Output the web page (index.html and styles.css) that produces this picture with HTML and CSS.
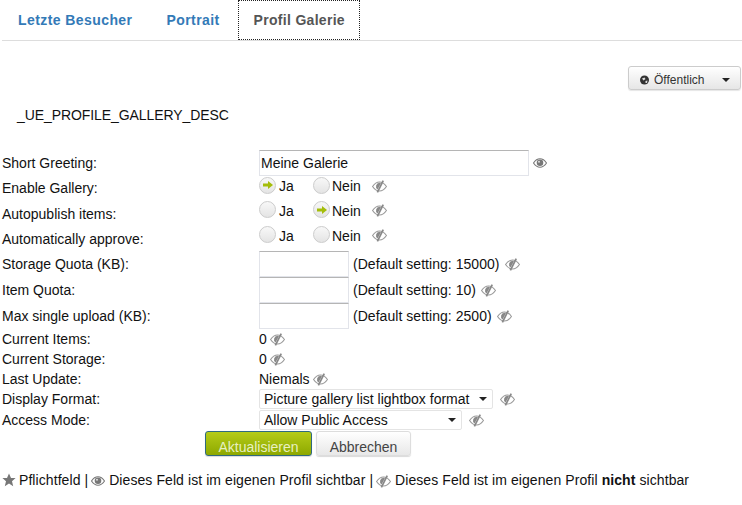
FILE: index.html
```html
<!DOCTYPE html>
<html lang="de">
<head>
<meta charset="utf-8">
<title>Profil Galerie</title>
<link rel="stylesheet" href="styles.css">
</head>
<body>
<svg class="defs" width="0" height="0" aria-hidden="true">
  <symbol id="eye" viewBox="0 0 14 10">
    <path d="M0.5 5C2.5 2 4.6 .8 7 .8S11.5 2 13.5 5C11.5 8 9.4 9.2 7 9.2S2.5 8 .5 5Z" fill="#fff" stroke="#777" stroke-width="1.1"/>
    <circle cx="7" cy="4.8" r="3.3" fill="#777"/>
    <circle cx="6" cy="3.8" r="1" fill="#ddd"/>
  </symbol>
  <symbol id="noeye" viewBox="0 0 14 12">
    <path d="M0.5 6C2.5 3 4.6 1.8 7 1.8S11.5 3 13.5 6C11.5 9 9.4 10.2 7 10.2S2.5 9 .5 6Z" fill="#fff" stroke="#999" stroke-width="1"/>
    <path d="M7 2.6A3.4 3.4 0 0 0 5.2 8.8L8.4 2.9A3.4 3.4 0 0 0 7 2.6Z" fill="#888"/>
    <path d="M10.5 .6L5 11.4" stroke="#888" stroke-width="1.6" fill="none"/>
  </symbol>
  <symbol id="arrow" viewBox="0 0 10 8">
    <path d="M0 2.5H5V0L10 4L5 8V5.5H0Z" fill="#a4bd0a"/>
  </symbol>
</svg>

<nav class="tabs">
  <a class="tab">Letzte Besucher</a>
  <a class="tab">Portrait</a>
  <a class="tab active">Profil Galerie</a>
</nav>

<div class="privacy-row">
  <button class="privacy" type="button">
    <svg class="globe" viewBox="0 0 10 10"><circle cx="5" cy="5" r="4.5" fill="#333"/><path d="M2.5 3.5L5 2.5 6 4 4 5.5ZM6 6L8 5.5 7.5 8 6 8Z" fill="#ddd"/></svg>
    <span>Öffentlich</span>
    <i class="caret"></i>
  </button>
</div>

<p class="desc">_UE_PROFILE_GALLERY_DESC</p>

<form class="form">
  <div class="row r-greeting">
    <label>Short Greeting:</label>
    <div class="field"><input class="text wide" type="text" value="Meine Galerie"><svg class="ic eye-ic"><use href="#eye"/></svg></div>
  </div>
  <div class="row r-radio">
    <label>Enable Gallery:</label>
    <div class="field radios">
      <span class="opt"><span class="radio"><svg><use href="#arrow"/></svg></span>Ja</span>
      <span class="opt"><span class="radio"></span>Nein</span>
      <svg class="ic no-ic"><use href="#noeye"/></svg>
    </div>
  </div>
  <div class="row r-radio2">
    <label>Autopublish items:</label>
    <div class="field radios">
      <span class="opt"><span class="radio"></span>Ja</span>
      <span class="opt"><span class="radio"><svg><use href="#arrow"/></svg></span>Nein</span>
      <svg class="ic no-ic"><use href="#noeye"/></svg>
    </div>
  </div>
  <div class="row r-radio3">
    <label>Automatically approve:</label>
    <div class="field radios">
      <span class="opt"><span class="radio"></span>Ja</span>
      <span class="opt"><span class="radio"></span>Nein</span>
      <svg class="ic no-ic"><use href="#noeye"/></svg>
    </div>
  </div>
  <div class="row r-num">
    <label>Storage Quota (KB):</label>
    <div class="field"><input class="text num" type="text"><span class="hint">(Default setting: 15000)</span><svg class="ic no-ic tight"><use href="#noeye"/></svg></div>
  </div>
  <div class="row r-num">
    <label>Item Quota:</label>
    <div class="field"><input class="text num" type="text"><span class="hint">(Default setting: 10)</span><svg class="ic no-ic tight"><use href="#noeye"/></svg></div>
  </div>
  <div class="row r-num">
    <label>Max single upload (KB):</label>
    <div class="field"><input class="text num" type="text"><span class="hint">(Default setting: 2500)</span><svg class="ic no-ic tight"><use href="#noeye"/></svg></div>
  </div>
  <div class="row r-plain">
    <label>Current Items:</label>
    <div class="field">0<svg class="ic no-ic tight"><use href="#noeye"/></svg></div>
  </div>
  <div class="row r-plain">
    <label>Current Storage:</label>
    <div class="field">0<svg class="ic no-ic tight"><use href="#noeye"/></svg></div>
  </div>
  <div class="row r-plain">
    <label>Last Update:</label>
    <div class="field">Niemals<svg class="ic no-ic tight"><use href="#noeye"/></svg></div>
  </div>
  <div class="row r-select">
    <label>Display Format:</label>
    <div class="field"><span class="select s-format">Picture gallery list lightbox format<i class="caret"></i></span><svg class="ic no-ic sel"><use href="#noeye"/></svg></div>
  </div>
  <div class="row r-select">
    <label>Access Mode:</label>
    <div class="field"><span class="select s-access">Allow Public Access<i class="caret"></i></span><svg class="ic no-ic sel"><use href="#noeye"/></svg></div>
  </div>
  <div class="actions">
    <button class="btn primary" type="button">Aktualisieren</button>
    <button class="btn" type="button">Abbrechen</button>
  </div>
</form>

<p class="legend">
  <svg class="star" viewBox="0 0 14 14"><path d="M7 .5L9 5H13.6L10 8.2 11.2 13.2 7 10.5 2.8 13.2 4 8.2 .4 5H5Z" fill="#777"/></svg>
  Pflichtfeld | <svg class="ic eye-ic"><use href="#eye"/></svg> Dieses Feld ist im eigenen Profil sichtbar | <svg class="ic no-ic"><use href="#noeye"/></svg> Dieses Feld ist im eigenen Profil <b>nicht</b> sichtbar
</p>
</body>
</html>
```

FILE: styles.css
```css
* { box-sizing: border-box; }
html, body { margin: 0; padding: 0; }
body {
  font-family: "Liberation Sans", Arial, sans-serif;
  font-size: 14px;
  color: #111;
  background: #fff;
  width: 742px;
  height: 505px;
  overflow: hidden;
}
.defs { display: block; height: 0; }

.tabs {
  display: flex;
  align-items: stretch;
  height: 41px;
  margin-left: 2px;
  border-bottom: 1px solid #ddd;
}
.tab {
  display: flex;
  align-items: center;
  padding: 0 16px;
  height: 40px;
  font-weight: bold;
  color: #337ab7;
  letter-spacing: 0.42px;
  margin-right: 2px;
  white-space: nowrap;
}
.tab.active {
  margin-left: 0;
  padding: 0 14px 0 15px;
  width: 122px;
  color: #555;
  letter-spacing: 0.3px;
  border: 1px dotted #222;
  background: #fff;
}

.privacy-row {
  display: flex;
  justify-content: flex-end;
  padding: 25px 1px 0 0;
}
.privacy {
  display: flex;
  align-items: center;
  width: 113px;
  height: 24px;
  padding: 3px 0 0 10px;
  font: 12px "Liberation Sans", Arial, sans-serif;
  color: #333;
  border: 1px solid #ccc;
  border-radius: 3px;
  background: linear-gradient(#fff, #e6e6e6);
  box-shadow: 0 1px 1px rgba(0,0,0,.1);
}
.globe { width: 11px; height: 10px; margin-right: 4px; }
.privacy .caret { margin-left: 18px; }
.caret {
  display: inline-block;
  width: 0;
  height: 0;
  border-top: 4px solid #222;
  border-left: 4px solid transparent;
  border-right: 4px solid transparent;
}

.desc { margin: 0; padding: 17px 0 0 17px; height: 60px; line-height: 16px; letter-spacing: -0.08px; }

.row { display: flex; align-items: center; padding-left: 2px; }
.row label { width: 257px; flex: none; }
.field { display: flex; align-items: center; }
.r-greeting { height: 26px; }
.r-radio { height: 24px; }
.r-radio2 { height: 27px; }
.r-radio3 { height: 23px; margin-bottom: 1px; }
.r-radio2 .radios, .r-radio3 .radios { padding-bottom: 6px; }
.r-num { height: 26px; }
.r-plain { height: 20px; }
.r-select { height: 21px; align-items: flex-start; }
.r-select label { line-height: 20px; }

.text {
  display: block;
  height: 26px;
  border: 1px solid #e2e4ea;
  border-top-color: #b5b5b5;
  font: 14px "Liberation Sans", Arial, sans-serif;
  color: #111;
  padding: 0 1px;
  outline: none;
}
.wide { width: 270px; }
.num { width: 90px; }
.hint { margin: 0 2px 0 4px; letter-spacing: 0.04px; }

.ic { display: inline-block; vertical-align: -2px; }
.eye-ic { width: 14px; height: 10px; margin-left: 4px; }
.no-ic { width: 15px; height: 13px; margin-left: 13px; }
.no-ic.tight { margin-left: 3px; }
.no-ic.sel { margin-left: 7px; }
.legend .no-ic { margin-left: -1px; vertical-align: -3px; }
.legend .eye-ic { margin-left: -1px; vertical-align: -1px; }

.radios { gap: 0; padding-bottom: 4px; }
.opt { display: flex; align-items: center; width: 54px; flex: none; }
.opt + .opt { width: 46px; white-space: nowrap; }
.opt + .opt .radio { margin-right: 2px; }
.radio {
  display: flex;
  align-items: center;
  justify-content: center;
  flex: none;
  width: 17px;
  height: 17px;
  margin: 0 3px 2px 0;
  border: 1px solid #ccc;
  border-radius: 50%;
  background: linear-gradient(#f8f8f8, #e4e4e4);
}
.radio svg { width: 10px; height: 8px; }

.select {
  display: flex;
  align-items: center;
  justify-content: space-between;
  height: 20px;
  padding: 0 5px 0 4px;
  background: #fff;
  border: 1px solid #e4e4e4;
  border-radius: 2px;
}
.select .caret { border-width: 4px 4px 0; }
.s-format { width: 234px; }
.s-access { width: 203px; }

.actions { display: flex; gap: 4px; padding-left: 205px; }
.btn {
  height: 25px;
  padding: 7px 0 0;
  font: 14px "Liberation Sans", Arial, sans-serif;
  width: 95px;
  color: #444;
  border: 1px solid #ddd;
  border-radius: 3px;
  background: linear-gradient(#fff, #e8e8e8);
  box-shadow: 0 1px 1px rgba(0,0,0,.15);
}
.btn.primary {
  width: 107px;
  color: #e8f0c0;
  border-color: #2f6a80;
  background: linear-gradient(#b5cc18, #8da800);
}

.legend { margin: 0; padding: 16px 0 0 2px; line-height: 16px; white-space: nowrap; letter-spacing: 0.08px; }
.star { width: 14px; height: 14px; vertical-align: -2px; margin-right: -1px; }
```
